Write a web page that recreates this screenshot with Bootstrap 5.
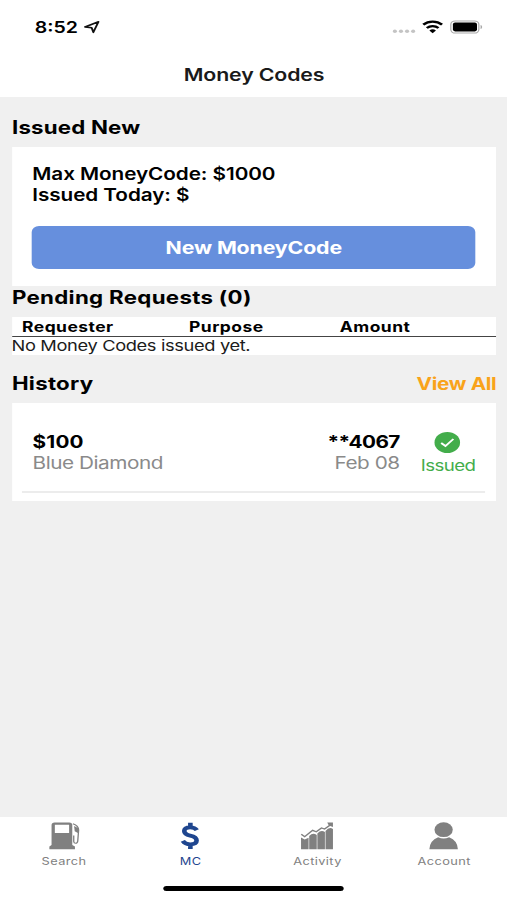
<!DOCTYPE html>
<html lang="en">
<head>
<meta charset="utf-8">
<meta name="viewport" content="width=device-width, initial-scale=1">
<title>Money Codes</title>
<link href="https://cdn.jsdelivr.net/npm/bootstrap@5.3.0/dist/css/bootstrap.min.css" rel="stylesheet">
<script src="https://cdn.jsdelivr.net/npm/bootstrap@5.3.0/dist/js/bootstrap.bundle.min.js" defer></script>
<style>
  html, body { height: 100%; overflow: hidden; }
  body { font-family: Inter, "Liberation Sans", sans-serif; background: #f0f0f0; color: #000; }
  /* The interface is laid out 416px wide and widened to the 507px window */
  .screen { width: 416px; height: 900px; transform: scaleX(1.21875); transform-origin: 0 0; background: #f0f0f0; }
  .screen svg { display: block; flex: none; }
  .topbar { height: 97px; }
  .status { height: 54px; padding: 0 20px 0 28.5px; }
  .clock { font-size: 16px; font-weight: 600; line-height: 20px; }
  .arrow { margin-left: 4.5px; }
  .wifi, .battery { margin-left: 5px; }
  .title { font-size: 17.5px; font-weight: 600; line-height: 22px; margin-top: 10px; padding-left: 1px; letter-spacing: -.12px; color: #1a1a1a; }
  .content { padding: 0 8.7px 0 9.5px; }
  .heading { font-size: 18.3px; font-weight: 700; line-height: 22px; letter-spacing: .22px; margin: 0; padding-left: .3px; }
  .first { padding-top: 19px; letter-spacing: .15px; }
  .issue-box { height: 139px; padding: 17px 17px 0 16.7px; margin-top: 9px; }
  .limits { font-size: 17px; font-weight: 600; line-height: 21px; letter-spacing: -.06px; padding-left: .3px; }
  .issue-btn, .issue-btn:hover { height: 43px; background: #668fdd; border: 0; border-radius: 6px; font-size: 17.5px; font-weight: 700; color: #fff; line-height: 43px; padding: 0; margin-top: 20px; letter-spacing: -.12px; }
  .pending { letter-spacing: .25px; }
  .requests { height: 38px; margin-top: 9px; }
  .req-head { height: 20px; font-size: 14.3px; font-weight: 700; line-height: 19px; letter-spacing: .4px; border-bottom: 1px solid #444; padding-left: 8.6px; }
  .req-head span { width: 137px; }
  .req-head span + span { width: 123.7px; }
  .req-empty { font-size: 15px; line-height: 18px; letter-spacing: -.3px; color: #1c1c1c; }
  .history-head { margin-top: 17px; height: 31px; }
  .view-all, .view-all:hover { font-size: 17px; font-weight: 700; color: #f9a31a; letter-spacing: -.25px; line-height: 24px; text-decoration: none; }
  .history { height: 98px; padding: 28px 9.4px 0 8.6px; }
  .entry { height: 62px; padding: 0 7.8px 0 8.6px; border-bottom: 2px solid #ececec; font-size: 17px; line-height: 21px; }
  .entry-text { padding-top: 1px; }
  .plus { letter-spacing: .15px; }
  .masked { letter-spacing: -.5px; }
  .muted { color: #8a8a8a; letter-spacing: -.37px; }
  .state { width: 46px; margin-left: 16.2px; }
  .issued { color: #43ad4b; font-size: 15.3px; line-height: 20px; letter-spacing: -.5px; margin-top: 3px; padding-left: 1px; }
  .tabs { height: 83px; }
  .tab { width: 104px; color: #808080; font-size: 10.5px; line-height: 14px; letter-spacing: .33px; padding: 4px 0 0 1px; text-decoration: none; }
  .tab svg { margin: 0 1.5px 5px 0; }
  .tab.current { color: #1f468f; }
  .home-bar { width: 148px; height: 5px; border-radius: 3px; background: #000; margin: 17px 0 0 .5px; }
</style>
</head>
<body>
<div class="screen d-flex flex-column">
  <header class="topbar bg-white">
    <div class="status d-flex align-items-center justify-content-between">
      <div class="d-flex align-items-center"><span class="clock">8:52</span>
        <svg class="arrow" width="14" height="14" viewBox="0 0 14 14" fill="none" stroke="#111" stroke-width="1.6" stroke-linejoin="round"><path d="M1.700 6.900L12.800 1.800L8.600 12.300L7.200 7.700Z"/></svg>
      </div>
      <div class="d-flex align-items-center">
        <svg width="19" height="14" viewBox="0 0 19 14" fill="#c4c4c4"><circle cx="2" cy="11.300" r="1.700"/><circle cx="7" cy="11.300" r="1.700"/><circle cx="12" cy="11.300" r="1.700"/><circle cx="17" cy="11.300" r="1.700"/></svg>
        <svg class="wifi" width="18" height="14" viewBox="0 0 18 14"><g fill="none" stroke="#000" stroke-width="2.300"><path d="M1.300 4.600a11.200 11.200 0 0 1 15.400 0"/><path d="M4.200 8a7.200 7.200 0 0 1 9.600 0"/></g><path d="M6.300 10.600a4 4 0 0 1 5.400 0L9 13.200Z"/></svg>
        <svg class="battery" width="27" height="14" viewBox="0 0 27 14"><rect x=".9" y=".9" width="23" height="12.200" rx="3.600" fill="none" stroke="#aaa"/><rect x="2.600" y="2.600" width="19.800" height="8.800" rx="1.800"/><path d="M25.300 5v4c1.800-.8 1.800-3.200 0-4z" fill="#aaa"/></svg>
      </div>
    </div>
    <h1 class="title text-center mb-0">Money Codes</h1>
  </header>

  <main class="content flex-grow-1">
    <h2 class="heading first">Issued New</h2>
    <section class="issue-box bg-white">
      <div class="limits">Max MoneyCode: $1000<br>Issued Today: $</div>
      <button type="button" class="issue-btn btn w-100 d-block">New MoneyCode</button>
    </section>

    <h2 class="heading pending">Pending Requests (0)</h2>
    <section class="requests bg-white">
      <div class="req-head d-flex"><span>Requester</span><span>Purpose</span><span>Amount</span></div>
      <div class="req-empty">No Money Codes issued yet.</div>
    </section>

    <div class="history-head d-flex justify-content-between">
      <h2 class="heading">History</h2><a class="view-all" href="#">View All</a>
    </div>
    <section class="history bg-white">
      <div class="entry d-flex">
        <div class="entry-text me-auto">
          <div class="fw-bold plus">$100</div>
          <div class="muted">Blue Diamond</div>
        </div>
        <div class="entry-text text-end">
          <div class="fw-bold masked">**4067</div>
          <div class="muted">Feb 08</div>
        </div>
        <div class="state d-flex flex-column align-items-center">
          <svg width="22" height="22" viewBox="0 0 22 22"><circle cx="11" cy="11.500" r="10.500" fill="#43ad4b"/><path d="M6 12L9.500 15L16 8" fill="none" stroke="#fff" stroke-width="1.700"/></svg>
          <div class="issued">Issued</div>
        </div>
      </div>
    </section>
  </main>

  <footer class="tabs bg-white d-flex flex-column align-items-center">
    <nav class="d-flex w-100">
      <a href="#" class="tab d-flex flex-column align-items-center">
        <svg width="28" height="29" viewBox="0 0 28 29" fill="#808080"><path d="M2.500 25.500l1.800-1.500V4q0-2.500 2.500-2.500h12Q21.300 1.500 21.300 4v20l2.200 1.500v2.800h-21zM7 3.800v8.200h11.700V3.800z" fill-rule="evenodd"/><path d="M21.800 2.800Q26.600 5 26.500 9L25.800 20q-.2 2.300-1.700 2.300T22.500 20.500v-6" fill="none" stroke="#808080" stroke-width="1.100"/><path d="M22.800 5l3.500 2.300v5l-3-2z"/></svg>
        <span>Search</span>
      </a>
      <a href="#" class="tab current d-flex flex-column align-items-center">
        <svg width="24" height="29" viewBox="0 0 24 29" fill="none" stroke="#1f468f" stroke-width="3.800"><path d="M17.500 9.200Q16 6.300 12 6.300Q7.200 6.300 7.200 10Q7.200 13.300 12 14.600Q17.300 16 17.300 19.500Q17.300 23.300 12 23.300Q7.800 23.300 6 19.900M12.200 1.800v5M12.200 23v5"/></svg>
        <span>MC</span>
      </a>
      <a href="#" class="tab d-flex flex-column align-items-center">
        <svg width="28" height="29" viewBox="0 0 28 29" fill="#808080"><path d="M1 28.300V16.500l3 2 3.200-1.700v11.500zM7.700 28.300V15q3-4 6.200-1v14.300zM14.400 28.300V12.500q3-4 6.200-1.500v17.300zM21.100 28.300V10Q24 5.500 27.200 8v20.300z"/><path d="M1.200 13.300L4 15.700 10.500 9.300l3 1.500L17.800 7l2.500 1L25 4" fill="none" stroke="#808080" stroke-width="1.300"/><path d="M22.500 1.500h4.700v4.500l-3.400-1.500z"/></svg>
        <span>Activity</span>
      </a>
      <a href="#" class="tab d-flex flex-column align-items-center">
        <svg width="26" height="29" viewBox="0 0 26 29" fill="#808080"><ellipse cx="13" cy="8.700" rx="7.500" ry="7.400"/><path d="M1.300 28.300Q1.500 19.500 8.500 16.200Q13 18.800 17.500 16.200Q24.500 19.500 24.700 28.300z"/></svg>
        <span>Account</span>
      </a>
    </nav>
    <div class="home-bar"></div>
  </footer>
</div>
</body>
</html>
